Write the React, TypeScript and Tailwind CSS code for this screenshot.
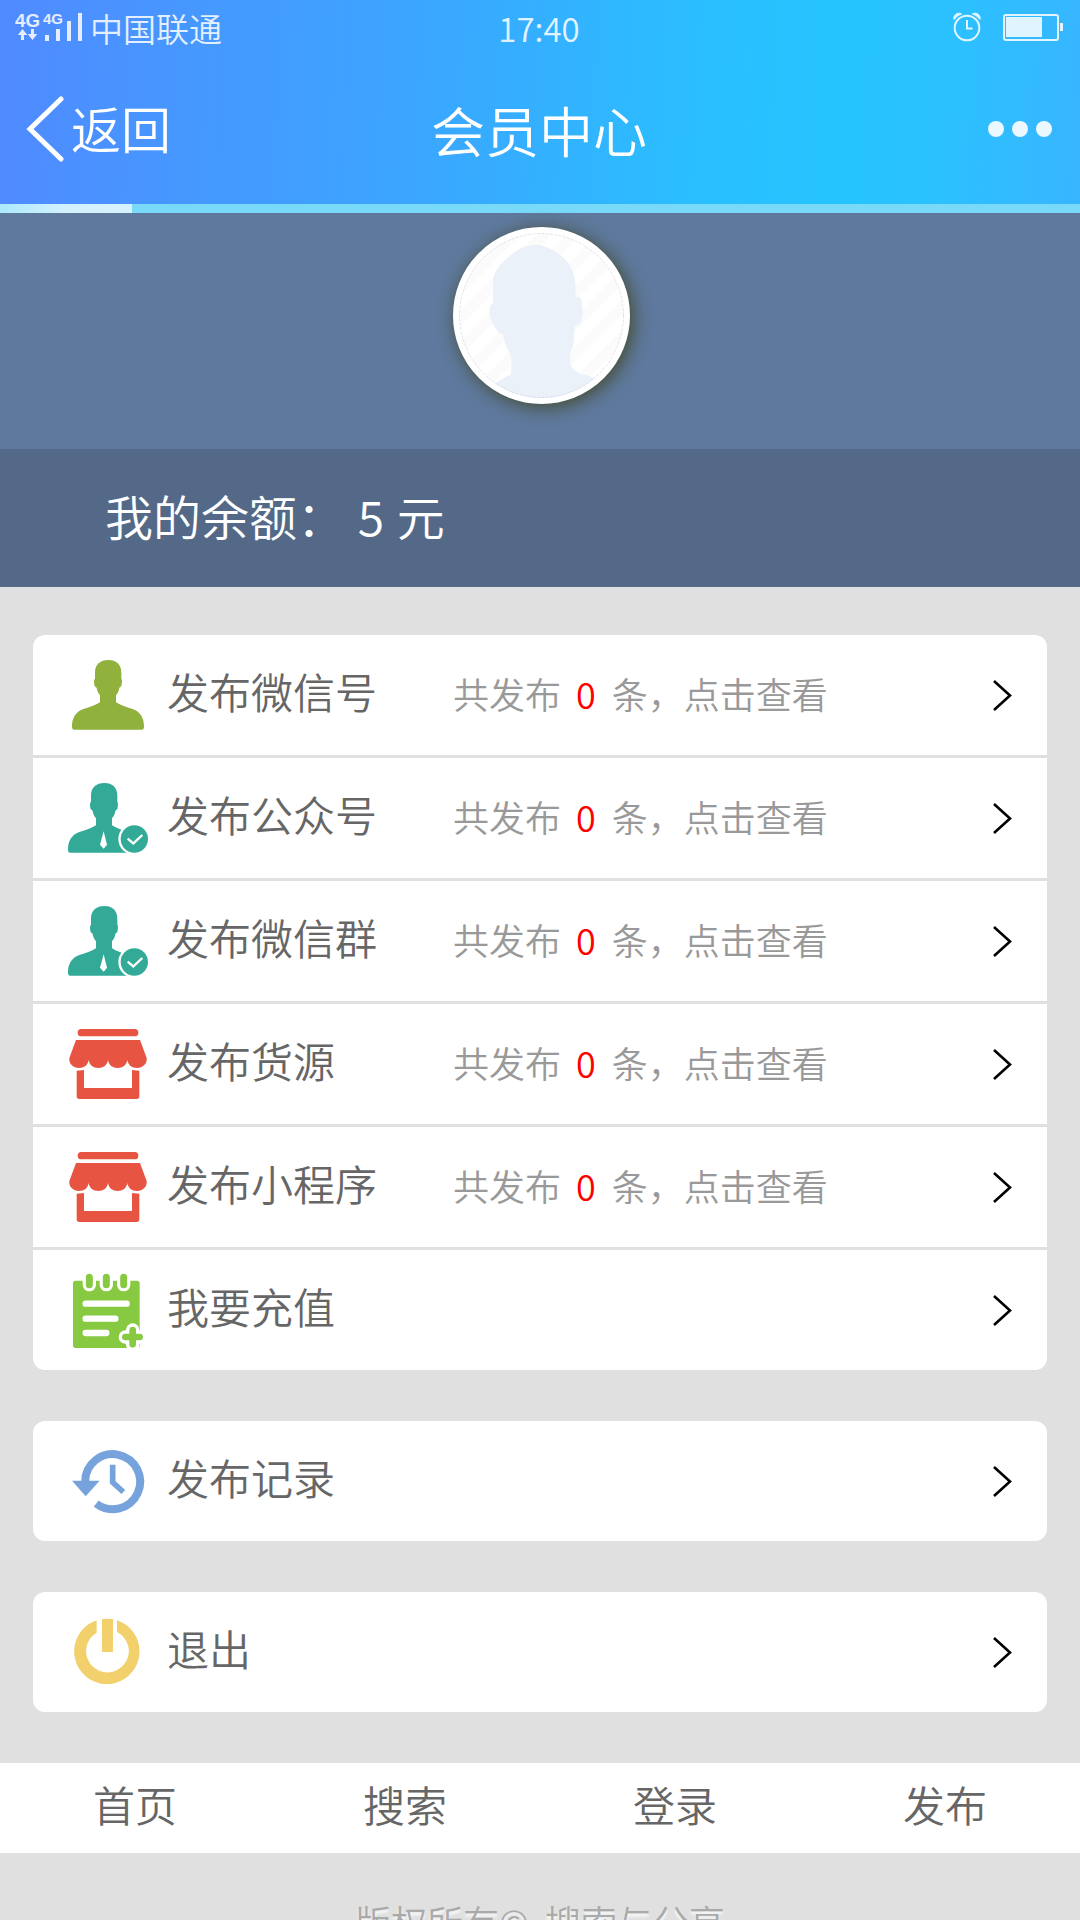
import type { ReactNode } from 'react';

interface MenuItem {
  label: string;
  icon: ReactNode;
  count?: number;
}

interface MenuRowProps {
  item: MenuItem;
}

function SignalIcon() {
  return (
    <svg width="68" height="32" viewBox="14 11 68 32" fill="#fff">
      <text x="15" y="26.5" fontSize="19" fontWeight="700" fontFamily="Liberation Sans" textLength="25" lengthAdjust="spacingAndGlyphs">4G</text>
      <text x="43" y="24" fontSize="15" fontWeight="700" fontFamily="Liberation Sans" textLength="20" lengthAdjust="spacingAndGlyphs">4G</text>
      <path d="M22.5 29l4.8 6H24v5h-3v-5h-3.200z" />
      <path d="M32.500 40l-4.800-6H31v-5h3v5h3.300z" />
      <path d="M45 35h4v6h-4zM56 29h4v12h-4zM67 21h4v20h-4zM78 13h4v28h-4z" />
    </svg>
  );
}

function AlarmIcon() {
  return (
    <svg width="28" height="30" viewBox="0 0 28 30" fill="none" stroke="#fff">
      <circle cx="14" cy="16" r="12.300" strokeWidth="2" />
      <path d="M14 8v8.500h5.500" strokeWidth="2" />
      <path d="M1 7.500C0 4 3 1 6.500 1.200L8.500 2C5.500 3 3 5 1 7.500zM27 7.500C28 4 25 1 21.500 1.200L19.500 2C22.500 3 25 5 27 7.500z" fill="#fff" stroke="#fff" strokeWidth="1" />
    </svg>
  );
}

function BatteryIcon() {
  return (
    <svg width="61" height="28" viewBox="0 0 61 28">
      <rect x="1" y="2" width="54" height="25" rx="2" fill="none" stroke="#fff" strokeWidth="2" />
      <path d="M3 4h36v20H3zM57 10h3v8h-3z" fill="#fff" />
    </svg>
  );
}

const headPath =
  'M235 90c25 0 39 14 39 38v18c3 2 2 14 0 22-2 4-5 3-6 6-1 8-5 16-10 22v21c16 10 34 15 50 20 24 9 34 28 34 53 0 6-2 9-7 9H133c-5 0-7-3-7-9 0-25 10-44 34-53 16-5 34-10 50-20v-21c-5-6-9-14-10-22-1-3-4-2-6-6-2-8-3-20 1-22v-18c0-24 15-38 40-38z';

function PersonIcon() {
  return (
    <svg className="size-21" viewBox="108 69 252 252">
      <path d={headPath} fill="#90b13c" />
    </svg>
  );
}

function VerifiedPersonIcon() {
  return (
    <svg className="size-21" viewBox="108 69 252 252">
      <path d={headPath} fill="#33aa98" transform="translate(-12 0)" />
      <path d="M221 235l10 40-10 12-11-12z" fill="#fff" />
      <circle cx="313" cy="258" r="48" fill="#fff" />
      <circle cx="313" cy="258" r="41" fill="#33aa98" />
      <path d="M293 257l17 14 27-25" fill="none" stroke="#fff" strokeWidth="7" />
    </svg>
  );
}

function ShopIcon() {
  return (
    <svg className="size-21" viewBox="108 66 252 252" fill="#e85442">
      <rect x="143" y="87" width="182" height="22" rx="11" />
      <path d="M138 120h192l20 54c2 17-11 30-29 30-15 0-27-9-29-24-2 15-14 24-29 24s-27-9-29-24c-2 15-14 24-29 24s-27-9-29-24c-2 15-14 24-29 24-18 0-31-13-29-30z" />
      <path d="M140 212l22-2v54h144v-54l22 2v77q0 8-8 8H148q-8 0-8-8z" />
    </svg>
  );
}

function NoteIcon() {
  return (
    <svg className="size-21" viewBox="108 54 252 252">
      <rect x="129" y="92" width="200" height="202" rx="8" fill="#88c942" />
      <g strokeLinecap="round" fill="none">
        <path d="M178 82v22M229 82v22M281 82v22" stroke="#fff" strokeWidth="40" />
        <path d="M178 82v22M229 82v22M281 82v22" stroke="#88c942" strokeWidth="21" />
        <path d="M167 161h123M167 206h89M167 249h62" stroke="#fff" strokeWidth="19" />
        <path d="M308 240v44M286 261h43" stroke="#fff" strokeWidth="40" />
        <path d="M308 240v43M286 261h43" stroke="#88c942" strokeWidth="20" />
      </g>
    </svg>
  );
}

function HistoryIcon() {
  return (
    <svg className="size-21" viewBox="108 567 252 252" fill="none" stroke="#76a3db">
      <path d="M165.500 695a82.500 82.500 0 1 1 33 66" strokeWidth="24" />
      <path d="M126 692h83l-42 47z" fill="#76a3db" stroke="none" />
      <path d="M248 644v53l32 29" strokeWidth="17" />
    </svg>
  );
}

function PowerIcon() {
  return (
    <svg className="size-21" viewBox="108 180 252 252" fill="#f2d06c">
      <path d="M200 211v37a64 64 0 1 0 61-2v-35a98 98 0 1 1-61 0z" />
      <path d="M216 207q17-2 33 0v96q0 3-3 3h-27q-3 0-3-3z" />
    </svg>
  );
}

function Avatar() {
  return (
    <div className="size-[177px] overflow-hidden rounded-full border-[6px] border-white bg-white shadow-[3px_3px_18px_#444a2c]">
      <svg className="size-full" viewBox="117 99 495 495">
        <defs>
          <pattern id="stripes" width="64" height="64" patternUnits="userSpaceOnUse" patternTransform="rotate(45)">
            <rect width="64" height="64" fill="#fff" />
            <rect width="32" height="64" fill="#fbfbfb" />
          </pattern>
        </defs>
        <rect x="117" y="99" width="495" height="495" fill="url(#stripes)" />
        <path
          d="M350 135c-22 0-50 5-82 34-32 28-49 50-49 77v66c-8 2-10 8-10 22 0 28 14 46 27 65 4 3 8 1 13 4 3 22 11 43 23 62 3 10 3 40 0 61-9 0-12 3-20 9-12 4-22 11-37 28v60h330v-70c-24-20-38-27-52-29-6-1-8 0-13-3-16-9-26-18-30-29v-33c14-25 12-50 13-83 12-1 17-1 20-13 7-20 6-46 0-67-2-6-9-6-16-6 0-42-1-68-18-94-18-28-63-61-99-61z"
          fill="#ebf1f9"
        />
        <circle cx="364.500" cy="346.500" r="246" fill="none" stroke="#c9d1e0" strokeWidth="2" strokeDasharray="9 4" />
      </svg>
    </div>
  );
}

const publishItems: MenuItem[] = [
  { label: '发布微信号', icon: <PersonIcon />, count: 0 },
  { label: '发布公众号', icon: <VerifiedPersonIcon />, count: 0 },
  { label: '发布微信群', icon: <VerifiedPersonIcon />, count: 0 },
  { label: '发布货源', icon: <ShopIcon />, count: 0 },
  { label: '发布小程序', icon: <ShopIcon />, count: 0 },
  { label: '我要充值', icon: <NoteIcon /> },
];

const groups: MenuItem[][] = [
  publishItems,
  [{ label: '发布记录', icon: <HistoryIcon /> }],
  [{ label: '退出', icon: <PowerIcon /> }],
];

const navItems = ['首页', '搜索', '登录', '发布'];

function MenuRow({ item }: MenuRowProps) {
  return (
    <a className="flex h-[120px] items-center bg-white pr-[35px] pl-[33px]">
      {item.icon}
      <span className="ml-[17px] w-[286px] pb-[9px] text-[42px] leading-none text-[#666]">{item.label}</span>
      {item.count !== undefined && (
        <span className="pb-[5px] text-[36px] leading-none whitespace-pre text-[#999]">
          共发布 <span className="mr-[8px] ml-[7px] text-[#f00]">{item.count}</span> 条，点击查看
        </span>
      )}
      <svg className="ml-auto" width="20" height="32" viewBox="0 0 20 32" fill="none" stroke="#000" strokeWidth="2.600">
        <path d="M2 2L18 16.500L2 31" />
      </svg>
    </a>
  );
}

export default function App() {
  return (
    <div className="flex h-[1920px] w-[1080px] flex-col overflow-hidden bg-[#e0e0e0] font-['Noto_Sans_CJK_SC',sans-serif] font-[350]">
      <header className="h-[204px] shrink-0 bg-[linear-gradient(93deg,#508aff_0%,#4698ff_18%,#3ea2ff_34%,#34b0ff_50%,#2abfff_65%,#25c4ff_78%,#2cc0ff_88%,#38b5ff_100%)] text-white">
        <div className="flex h-[54px] items-center pr-4 pl-[14px] opacity-85">
          <div className="flex flex-1 items-center">
            <SignalIcon />
            <span className="ml-[8px] pt-[2px] text-[33px] leading-none">中国联通</span>
          </div>
          <span className="pt-[2px] text-[33px] leading-none">17:40</span>
          <div className="flex flex-1 items-center justify-end gap-[22px]">
            <AlarmIcon />
            <BatteryIcon />
          </div>
        </div>
        <div className="flex h-[150px] items-center pr-7 pl-[26px]">
          <div className="flex flex-1 items-center">
            <svg width="39" height="66" viewBox="0 0 39 66" fill="none" stroke="#fff" strokeWidth="5" strokeLinecap="round">
              <path d="M35 3L4 33L35 63" />
            </svg>
            <span className="ml-[6px] pb-[4px] text-[50px] leading-none">返回</span>
          </div>
          <h1 className="pt-[2px] text-[54px] leading-none">会员中心</h1>
          <div className="flex flex-1 justify-end gap-2">
            <span className="size-4 rounded-full bg-[#ebf8ff]" />
            <span className="size-4 rounded-full bg-[#ebf8ff]" />
            <span className="size-4 rounded-full bg-[#ebf8ff]" />
          </div>
        </div>
      </header>

      {/* page load progress */}
      <div className="h-[9px] shrink-0 bg-[#78d9f9]">
        <div className="h-full w-[132px] bg-linear-to-r from-[#ade9fc] via-[#d2f1fd] to-[#d8f2fc]" />
      </div>

      <section className="flex h-[236px] shrink-0 justify-center bg-[#5e799d] pt-[14px] pl-[3px]">
        <Avatar />
      </section>
      <section className="flex h-[138px] shrink-0 items-center bg-[#536987] pb-[7px] pl-[105px] text-[48px] leading-none whitespace-pre text-white">
        我的余额： <span className="mr-[2px] ml-[2px]">5</span> 元
      </section>

      <main className="mt-12 flex shrink-0 flex-col gap-[51px] px-[33px]">
        {groups.map((items) => (
          <div key={items[0].label} className="flex flex-col gap-[3px] overflow-hidden rounded-xl">
            {items.map((item) => (
              <MenuRow key={item.label} item={item} />
            ))}
          </div>
        ))}
      </main>

      <nav className="mt-[51px] grid h-[90px] shrink-0 grid-cols-4 items-center bg-white text-center text-[42px] leading-none text-[#666]">
        {navItems.map((label) => (
          <a key={label} className="pb-[8px]">{label}</a>
        ))}
      </nav>

      <footer className="shrink-0 pt-[50px] text-center text-[36px] leading-none whitespace-pre text-[#aaa] [text-shadow:0_3px_3px_#fff]">
        版权所有©  搜索与分享
      </footer>
    </div>
  );
}
